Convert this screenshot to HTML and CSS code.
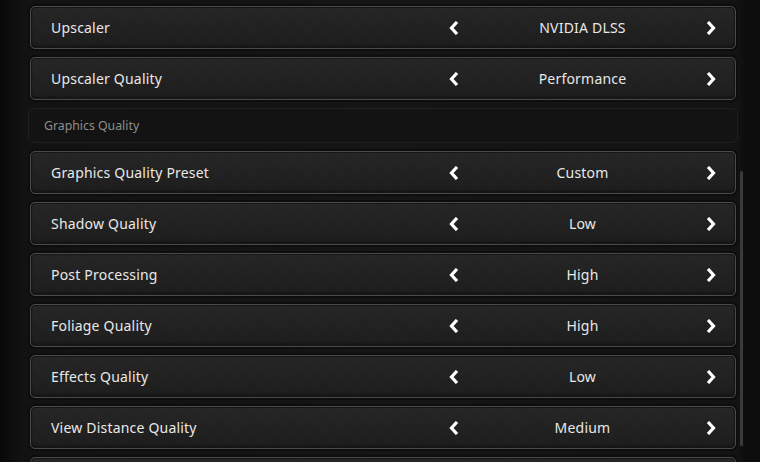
FILE: index.html
```html
<!DOCTYPE html>
<html lang="en">
<head>
    <meta charset="UTF-8">
    <title>Graphics Settings</title>
    <link rel="stylesheet" href="styles.css">
</head>
<body>
    <div class="page">
        <div class="settings-list">
            <!-- row cut off above the viewport -->
            <div class="setting-row setting-row-partial"></div>

            <div class="setting-row">
                <span class="setting-label">Upscaler</span>
                <div class="selector">
                    <span class="arrow"><svg viewBox="0 0 10 14"><path d="M8 1 L2.5 7 L8 13"/></svg></span>
                    <span class="selector-value">NVIDIA DLSS</span>
                    <span class="arrow"><svg viewBox="0 0 10 14"><path d="M2 1 L7.5 7 L2 13"/></svg></span>
                </div>
            </div>

            <div class="setting-row">
                <span class="setting-label">Upscaler Quality</span>
                <div class="selector">
                    <span class="arrow"><svg viewBox="0 0 10 14"><path d="M8 1 L2.5 7 L8 13"/></svg></span>
                    <span class="selector-value">Performance</span>
                    <span class="arrow"><svg viewBox="0 0 10 14"><path d="M2 1 L7.5 7 L2 13"/></svg></span>
                </div>
            </div>

            <div class="section-header">Graphics Quality</div>

            <div class="setting-row">
                <span class="setting-label">Graphics Quality Preset</span>
                <div class="selector">
                    <span class="arrow"><svg viewBox="0 0 10 14"><path d="M8 1 L2.5 7 L8 13"/></svg></span>
                    <span class="selector-value">Custom</span>
                    <span class="arrow"><svg viewBox="0 0 10 14"><path d="M2 1 L7.5 7 L2 13"/></svg></span>
                </div>
            </div>

            <div class="setting-row">
                <span class="setting-label">Shadow Quality</span>
                <div class="selector">
                    <span class="arrow"><svg viewBox="0 0 10 14"><path d="M8 1 L2.5 7 L8 13"/></svg></span>
                    <span class="selector-value">Low</span>
                    <span class="arrow"><svg viewBox="0 0 10 14"><path d="M2 1 L7.5 7 L2 13"/></svg></span>
                </div>
            </div>

            <div class="setting-row">
                <span class="setting-label">Post Processing</span>
                <div class="selector">
                    <span class="arrow"><svg viewBox="0 0 10 14"><path d="M8 1 L2.5 7 L8 13"/></svg></span>
                    <span class="selector-value">High</span>
                    <span class="arrow"><svg viewBox="0 0 10 14"><path d="M2 1 L7.5 7 L2 13"/></svg></span>
                </div>
            </div>

            <div class="setting-row">
                <span class="setting-label">Foliage Quality</span>
                <div class="selector">
                    <span class="arrow"><svg viewBox="0 0 10 14"><path d="M8 1 L2.5 7 L8 13"/></svg></span>
                    <span class="selector-value">High</span>
                    <span class="arrow"><svg viewBox="0 0 10 14"><path d="M2 1 L7.5 7 L2 13"/></svg></span>
                </div>
            </div>

            <div class="setting-row">
                <span class="setting-label">Effects Quality</span>
                <div class="selector">
                    <span class="arrow"><svg viewBox="0 0 10 14"><path d="M8 1 L2.5 7 L8 13"/></svg></span>
                    <span class="selector-value">Low</span>
                    <span class="arrow"><svg viewBox="0 0 10 14"><path d="M2 1 L7.5 7 L2 13"/></svg></span>
                </div>
            </div>

            <div class="setting-row">
                <span class="setting-label">View Distance Quality</span>
                <div class="selector">
                    <span class="arrow"><svg viewBox="0 0 10 14"><path d="M8 1 L2.5 7 L8 13"/></svg></span>
                    <span class="selector-value">Medium</span>
                    <span class="arrow"><svg viewBox="0 0 10 14"><path d="M2 1 L7.5 7 L2 13"/></svg></span>
                </div>
            </div>

            <!-- next row, cut off by the bottom -->
            <div class="setting-row"></div>
        </div>

        <div class="scroll-track">
            <div class="scroll-thumb"></div>
        </div>
    </div>
</body>
</html>
```

FILE: styles.css
```css
/* 全局重置 */
* {
    margin: 0;
    padding: 0;
    box-sizing: border-box;
}

html,
body {
    height: 100%;
    overflow: hidden;
}

body {
    background: linear-gradient(to right, #080808 0px, #121212 22px, #151515 380px, #131313 738px, #0c0c0c 746px, #0c0c0c 100%);
    font-family: "Noto Sans", "Open Sans", sans-serif;
    color: #e8e8e8;
}

/* 主布局：列表 + 滚动条 */
.page {
    display: flex;
    padding-left: 28px;
    height: 100%;
}

.settings-list {
    width: 710px;
    display: flex;
    flex-direction: column;
    gap: 8px;
    margin-top: -45px;
}

/* 单行设置 */
.setting-row {
    flex: none;
    height: 43px;
    margin: 0 2px;
    display: flex;
    align-items: center;
    justify-content: space-between;
    padding: 0 14px 0 20px;
    border: 1px solid #4a4a4a;
    border-radius: 5px;
    background:
        repeating-linear-gradient(45deg, rgba(255, 255, 255, 0.012) 0 1px, transparent 1px 3px),
        linear-gradient(to bottom, #252525, #1f1f1f 70%, #1c1c1c);
    box-shadow:
        0 0 0 2px #0d0d0d,
        inset 0 0 0 1px #161616,
        inset 0 -2px 3px rgba(0, 0, 0, 0.4);
}

.setting-label {
    font-size: 14px;
    font-weight: 400;
    letter-spacing: 0.2px;
}

/* 左右切换选择器 */
.selector {
    width: 277px;
    display: flex;
    align-items: center;
}

.arrow {
    width: 20px;
    height: 20px;
    display: flex;
    align-items: center;
    justify-content: center;
}

.arrow svg {
    width: 10px;
    height: 14px;
    fill: none;
    stroke: #ffffff;
    stroke-width: 3.2;
    stroke-linejoin: miter;
    stroke-miterlimit: 10;
}

.selector-value {
    flex: 1;
    text-align: center;
    font-size: 14px;
    font-weight: 400;
    letter-spacing: 0.2px;
}

/* 分组标题 */
.section-header {
    flex: none;
    height: 35px;
    display: flex;
    align-items: center;
    padding-left: 15px;
    border: 1px solid #1f1f1f;
    border-radius: 6px;
    background: #131313;
    font-size: 12.3px;
    color: #8e8e8e;
}

/* 滚动条 */
.scroll-track {
    width: 3px;
    margin-left: 2px;
}

.scroll-thumb {
    margin-top: 171px;
    height: 275px;
    width: 3px;
    border-radius: 2px;
    background: #3a3a3a;
}
```
